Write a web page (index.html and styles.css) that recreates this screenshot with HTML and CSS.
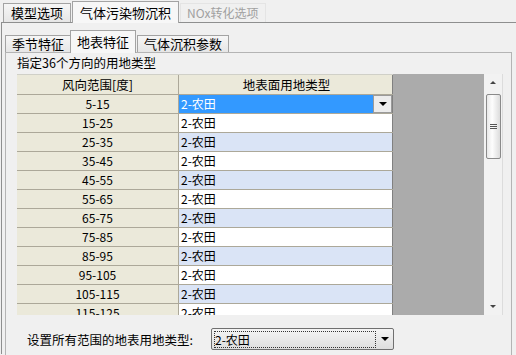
FILE: index.html
```html
<!DOCTYPE html>
<html lang="zh">
<head>
    <meta charset="UTF-8">
    <title>气体污染物沉积</title>
    <link rel="stylesheet" href="styles.css">
</head>
<body>
    <!-- outer tabs -->
    <div class="tabs outer-tabs">
        <div class="tab">模型选项</div>
        <div class="tab active">气体污染物沉积</div>
        <div class="tab disabled">NOx转化选项</div>
    </div>

    <div class="outer-panel">
        <!-- inner tabs -->
        <div class="tabs inner-tabs">
            <div class="tab">季节特征</div>
            <div class="tab active">地表特征</div>
            <div class="tab">气体沉积参数</div>
        </div>

        <div class="inner-panel">
            <div class="caption">指定36个方向的用地类型</div>

            <div class="grid">
                <div class="grid-body">
                    <div class="row head">
                        <div class="c1">风向范围[度]</div>
                        <div class="c2">地表面用地类型</div>
                    </div>
                    <div class="row selected">
                        <div class="c1">5-15</div>
                        <div class="c2">2-农田<span class="drop"><i class="tri"></i></span></div>
                    </div>
                    <div class="row"><div class="c1">15-25</div><div class="c2">2-农田</div></div>
                    <div class="row alt"><div class="c1">25-35</div><div class="c2">2-农田</div></div>
                    <div class="row"><div class="c1">35-45</div><div class="c2">2-农田</div></div>
                    <div class="row alt"><div class="c1">45-55</div><div class="c2">2-农田</div></div>
                    <div class="row"><div class="c1">55-65</div><div class="c2">2-农田</div></div>
                    <div class="row alt"><div class="c1">65-75</div><div class="c2">2-农田</div></div>
                    <div class="row"><div class="c1">75-85</div><div class="c2">2-农田</div></div>
                    <div class="row alt"><div class="c1">85-95</div><div class="c2">2-农田</div></div>
                    <div class="row"><div class="c1">95-105</div><div class="c2">2-农田</div></div>
                    <div class="row alt"><div class="c1">105-115</div><div class="c2">2-农田</div></div>
                    <div class="row"><div class="c1">115-125</div><div class="c2">2-农田</div></div>
                </div>
                <div class="filler"></div>
                <div class="scrollbar">
                    <div class="arrow up"></div>
                    <div class="thumb"><span></span><span></span><span></span></div>
                    <div class="track"></div>
                    <div class="arrow down"></div>
                </div>
            </div>

            <div class="set-all">
                <span class="set-label">设置所有范围的地表用地类型:</span>
                <div class="combo">
                    <span class="combo-text">2-农田</span>
                    <span class="combo-btn"><i class="tri"></i></span>
                </div>
            </div>
        </div>
    </div>
</body>
</html>
```

FILE: styles.css
```css
body {
    margin: 0;
    width: 516px;
    height: 355px;
    overflow: hidden;
    background-color: #f0f0f0;
    font-family: "Noto Sans CJK SC", "DejaVu Sans", sans-serif;
    font-size: 12px;
    color: #000;
}

/* tabs */
.tabs {
    display: flex;
    align-items: flex-end;
}

.tab {
    height: 18px;
    line-height: 18px;
    font-size: 13px;
    padding: 0 7px;
    border: 1px solid #a3a3a3;
    border-bottom: none;
    background: linear-gradient(#f6f6f6, #e6e6e6);
    margin-right: -1px;
}

.tab.active {
    height: 21px;
    line-height: 21px;
    background: #f7f7f7;
    margin-left: 2px;
    margin-right: 1px;
    position: relative;
    z-index: 1;
    margin-bottom: -1px;
    padding-bottom: 1px;
}

.outer-tabs {
    height: 22px;
    padding-left: 3px;
}

.outer-tabs .tab {
    width: 52px;
}

.outer-tabs .tab.active {
    width: 91px;
    padding: 0 7px;
}

.outer-tabs .tab.disabled {
    width: auto;
    color: #a0a0a0;
    border-color: #e4e4e4;
    background: #f0f0f0;
    padding-left: 6px;
    font-size: 12px;
}

.outer-panel {
    height: 332px;
    margin-left: 1px;
    border-left: 1px solid #8e8f8f;
    border-top: 1px solid #8e8f8f;
    padding: 7px 0 0 3px;
    box-sizing: border-box;
}

.inner-tabs {
    height: 22px;
}

.inner-tabs .tab {
    height: 16px;
    line-height: 16px;
    padding: 0 6px;
}

.inner-tabs .tab.active {
    height: 21px;
    line-height: 21px;
    margin-left: 0;
    padding: 0 6px 1px;
}

/* inner panel */
.inner-panel {
    width: 494px;
    height: 302px;
    border: 1px solid #b4b4b4;
    border-bottom: none;
    background-color: #f0f0f0;
    padding-left: 11px;
}

.caption {
    height: 21px;
    line-height: 20px;
    font-size: 12.5px;
}

/* grid */
.grid {
    display: flex;
    height: 241px;
    overflow: hidden;
}

.grid-body {
    width: 376px;
}

.row {
    display: flex;
    height: 18px;
    line-height: 18px;
    border-bottom: 1px solid #aca899;
}

.row .c1 {
    width: 161px;
    border-right: 1px solid #aca899;
    background-color: #ebe9da;
    text-align: center;
}

.row .c2 {
    width: 211px;
    padding-left: 2px;
    border-right: 1px solid #808080;
    background-color: #fff;
    position: relative;
}

.row.alt .c2 {
    background-color: #dae4f6;
}

.row.head {
    height: 19px;
    line-height: 19px;
    border-top: 1px solid #d0d0c8;
    font-size: 12.5px;
}

.row.head .c2 {
    background-color: #ebe9da;
    text-align: center;
}

.row.selected .c2 {
    background-color: #3399ff;
    color: #fff;
}

.drop {
    position: absolute;
    right: 0;
    top: 0;
    width: 17px;
    height: 16px;
    border: 1px solid #9a9a9a;
    background-color: #ececec;
    display: flex;
    align-items: center;
    justify-content: center;
}

.tri {
    width: 0;
    height: 0;
    border-left: 4px solid transparent;
    border-right: 4px solid transparent;
    border-top: 4px solid #000;
}

.filler {
    width: 91px;
    background-color: #ababab;
}

.scrollbar {
    width: 18px;
    display: flex;
    flex-direction: column;
    background-color: #f2f2f2;
    border-right: 1px solid #dcdcdc;
}

.arrow {
    height: 17px;
    display: flex;
    align-items: center;
    justify-content: center;
}

.arrow.up::after {
    content: "";
    border-left: 3px solid transparent;
    border-right: 3px solid transparent;
    border-bottom: 3px solid #444;
}

.arrow.down::after {
    content: "";
    border-left: 3px solid transparent;
    border-right: 3px solid transparent;
    border-top: 3px solid #444;
}

.thumb {
    height: 63px;
    margin: 3px 1px 0 2px;
    border: 1px solid #8a8a8a;
    border-radius: 2px;
    background: linear-gradient(to right, #e8e8e8, #fdfdfd 40%, #dcdcdc);
    display: flex;
    flex-direction: column;
    align-items: center;
    justify-content: center;
    gap: 1px;
}

.thumb span {
    width: 7px;
    height: 1px;
    background-color: #555;
}

.track {
    flex: 1;
}

/* bottom combobox */
.set-all {
    display: flex;
    align-items: center;
    margin-top: 13px;
    padding-left: 10px;
}

.set-label {
    width: 184px;
    font-size: 12.5px;
}

.combo {
    display: flex;
    align-items: center;
    width: 181px;
    height: 20px;
    border: 1px solid #707070;
    border-radius: 2px;
    background: linear-gradient(#f4f4f4, #dedede);
}

.combo-text {
    flex: 1;
    height: 15px;
    line-height: 15px;
    margin-left: 2px;
    border: 1px dotted #333;
}

.combo-btn {
    width: 17px;
    display: flex;
    justify-content: center;
}
```
